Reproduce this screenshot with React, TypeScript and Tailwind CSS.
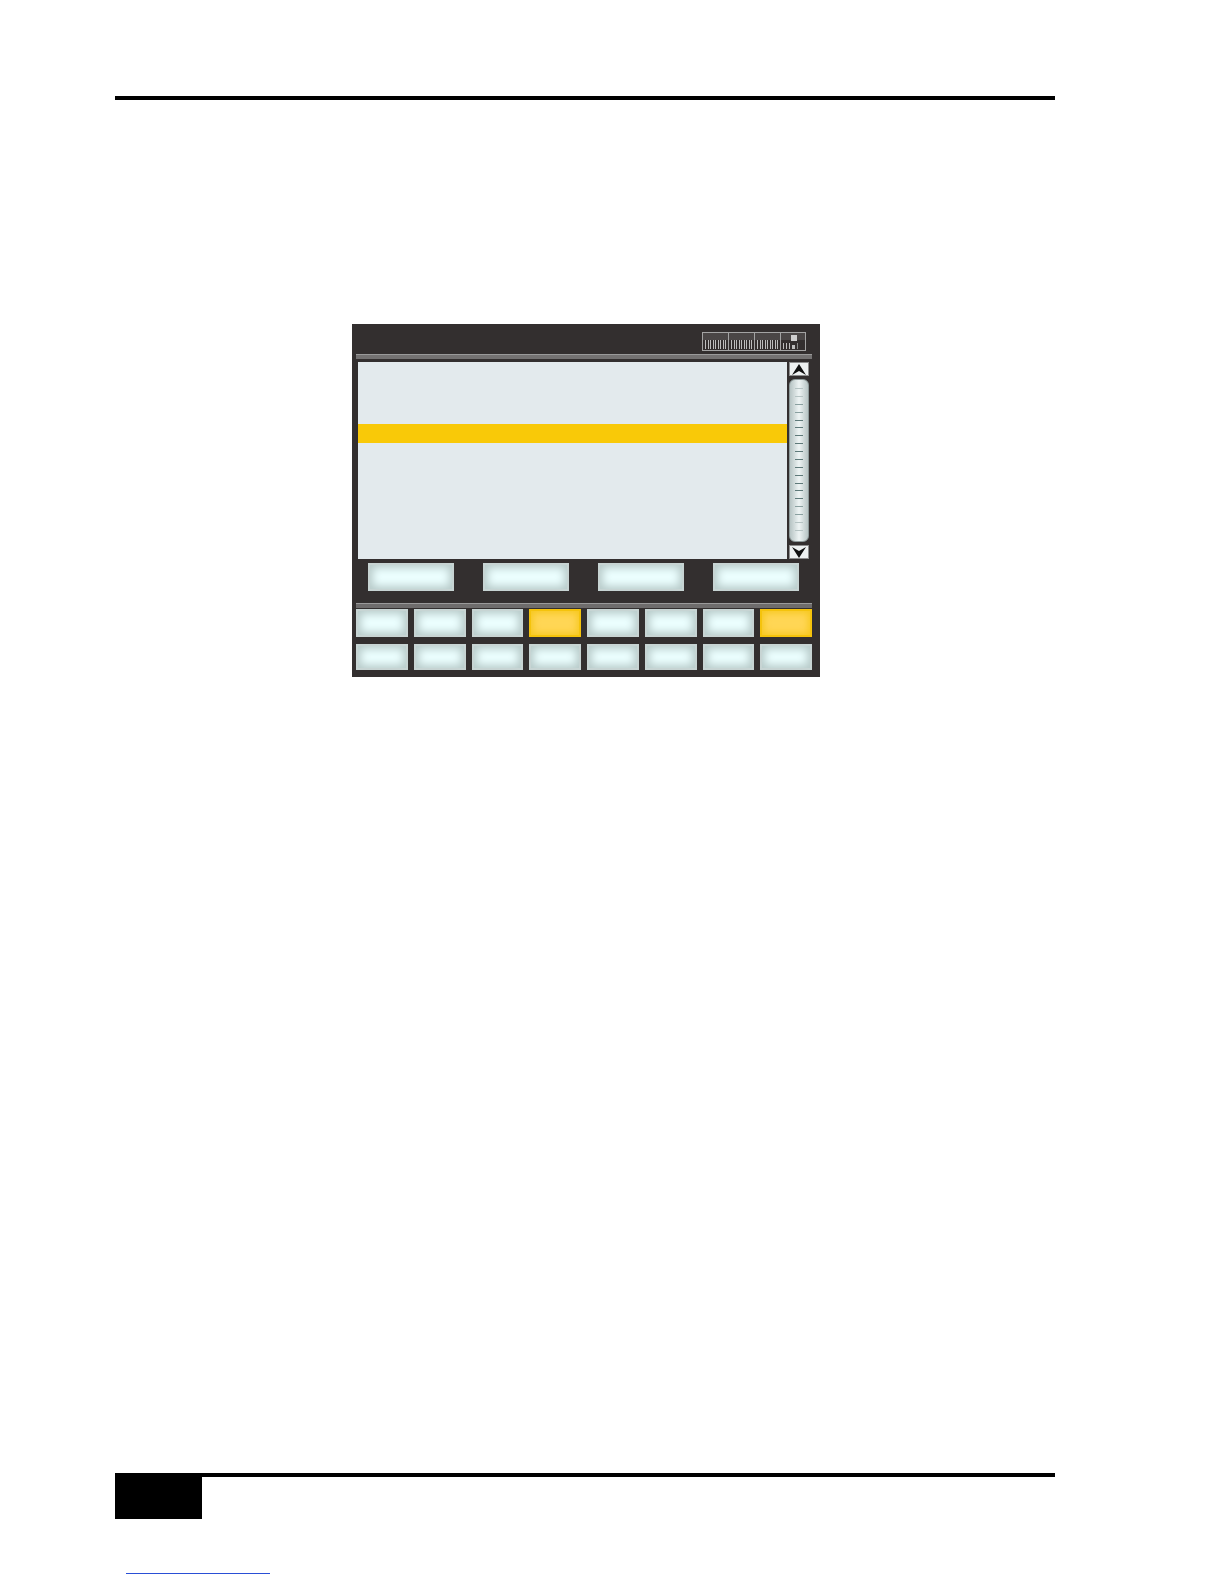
import React from 'react';

const tickCount = 19;

function Meter() {
  // small level meter in the title bar: 4 segments with tick lines
  const segs = [25, 26, 26, 25];
  return (
    <div className="flex h-[19px] border border-[#a3a3a3]">
      {segs.map((w, i) => (
        <div
          key={i}
          className={`relative flex flex-col ${i > 0 ? 'border-l border-[#a3a3a3]' : ''}`}
          style={{ width: w }}
        >
          <div className="h-[7px] bg-[#4a4646]" />
          {i < 3 ? (
            <div className="flex flex-1 items-stretch justify-between px-[2px] pb-[1px]">
              {Array.from({ length: 9 }).map((_, j) => (
                <div key={j} className="w-px bg-[#bdbdbd]" />
              ))}
            </div>
          ) : (
            <div className="flex flex-1 items-end gap-[2px] px-[2px] pb-[1px]">
              <div className="h-[6px] w-px bg-[#bdbdbd]" />
              <div className="h-[6px] w-px bg-[#bdbdbd]" />
              <div className="h-[6px] w-px bg-[#bdbdbd]" />
              <div className="h-[4px] w-[3px] bg-[#bdbdbd]" />
              <div className="h-[6px] w-px bg-[#8a8a8a]" />
            </div>
          )}
          {i === 3 && <div className="absolute left-[10px] top-[2px] h-[6px] w-[6px] bg-[#cfcfcf]" />}
        </div>
      ))}
    </div>
  );
}

function ArrowButton({ down }: { down?: boolean }) {
  return (
    <div className="flex h-[14px] w-[20px] items-center justify-center border border-[#8d8d8d] bg-[#eef1f1]">
      <svg width="14" height="11" viewBox="0 0 14 11" className={down ? 'rotate-180' : ''}>
        <path d="M7 0 L14 11 L7 7 L0 11 Z" fill="#111" />
      </svg>
    </div>
  );
}

function Key({ yellow, className = '' }: { yellow?: boolean; className?: string }) {
  return (
    <div
      className={`${className} ${
        yellow
          ? 'bg-[#ffd655] shadow-[inset_0_0_0_2px_#f5c30c,inset_0_0_7px_4px_#f7c820]'
          : 'bg-[#ecffff] shadow-[inset_0_0_0_2px_#c7d4d3,inset_0_0_8px_5px_#b8cbca]'
      }`}
    />
  );
}

export default function App() {
  const row1 = [false, false, false, true, false, false, false, true];
  const row2 = [false, false, false, false, false, false, false, false];

  return (
    <div className="min-h-[1584px] w-[1224px] bg-white font-['Liberation_Sans',Arial,sans-serif]">
      <div className="pt-[96px]">
        <div className="ml-[115px] h-[4px] w-[940px] bg-black" />
      </div>

      {/* device screen */}
      <div className="ml-[352px] mt-[224px] flex h-[353px] w-[468px] flex-col bg-[#332f2f] pl-[4px] pr-[8px]">
        <div className="flex h-[30px] items-start justify-end pr-[6px] pt-[8px]">
          <Meter />
        </div>
        <div className="h-[5px] border-t border-[#9a9a9a] bg-[#747272]" />

        <div className="mt-[3px] flex h-[197px] gap-[2px] pl-[2px]">
          <div className="flex-1 bg-[#e3eaed] pt-[62px]">
            <div className="h-[19px] bg-[#f9c908]" />
          </div>
          <div className="mr-[3px] flex w-[20px] flex-col gap-[3px]">
            <ArrowButton />
            <div className="flex flex-1 flex-col items-center justify-between rounded-[6px] border border-[#8e9a9a] bg-gradient-to-r from-[#b7c4c4] via-[#eef4f4] to-[#b7c4c4] px-[2px] pb-[10px] pt-[8px]">
              {Array.from({ length: tickCount }).map((_, i) => {
                const edge = Math.min(i, tickCount - 1 - i);
                return (
                  <div
                    key={i}
                    className={`h-px w-[8px] ${edge < 2 ? 'bg-[#b5c3c3]' : edge < 4 ? 'bg-[#8aa0a0]' : 'bg-[#5f7a7a]'}`}
                  />
                );
              })}
            </div>
            <ArrowButton down />
          </div>
        </div>

        <div className="mt-[4px] flex h-[28px] gap-[29px] pl-[12px]">
          {[0, 1, 2, 3].map((i) => (
            <Key key={i} className="w-[86px]" />
          ))}
        </div>

        <div className="mt-[12px] h-[5px] border-t border-[#9a9a9a] bg-[#6e6c6c]" />

        <div className="mt-[1px] grid h-[28px] grid-cols-8 gap-[6px]">
          {row1.map((y, i) => (
            <Key key={i} yellow={y} />
          ))}
        </div>
        <div className="mt-[7px] grid h-[26px] grid-cols-8 gap-[6px]">
          {row2.map((y, i) => (
            <Key key={i} yellow={y} />
          ))}
        </div>
      </div>

      {/* page footer */}
      <div className="mt-[796px]">
        <div className="ml-[115px] h-[4px] w-[940px] bg-black" />
        <div className="ml-[115px] h-[42px] w-[87px] bg-black" />
      </div>
      <div className="ml-[126px] mt-[54px] h-px w-[144px] bg-[#2a4fd6]" />
    </div>
  );
}
